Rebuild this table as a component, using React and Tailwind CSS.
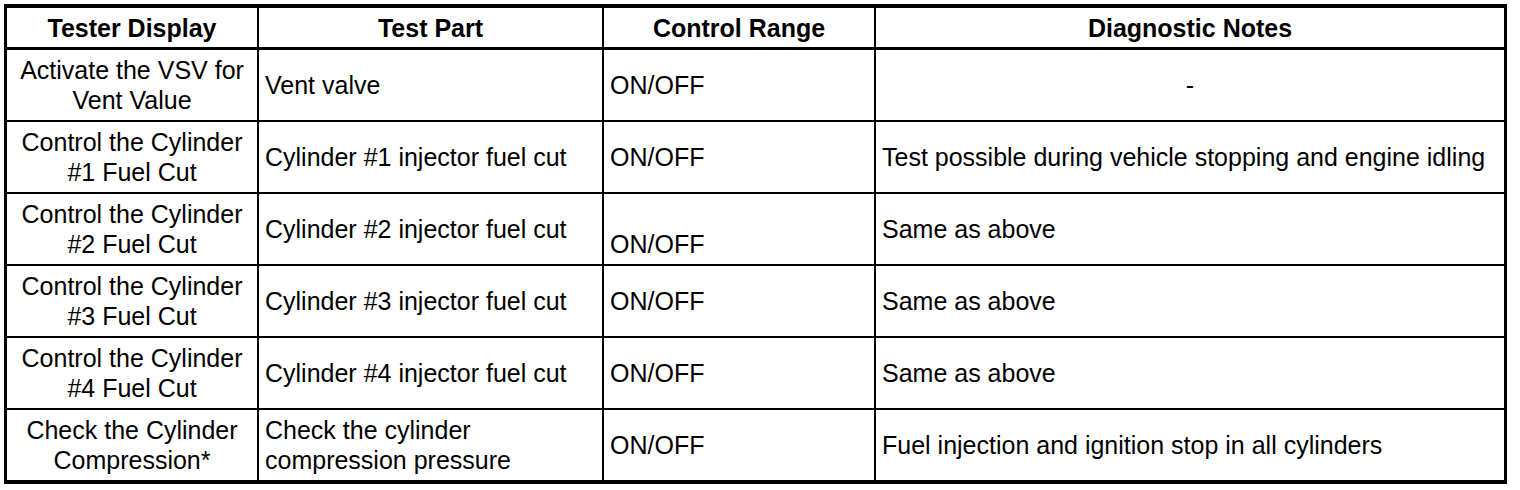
import React from "react";

const rows = [
  {
    display: ["Activate the VSV for", "Vent Value"],
    part: ["Vent valve"],
    range: ["ON/OFF"],
    notes: "-",
    notesCenter: true,
  },
  {
    display: ["Control the Cylinder", "#1 Fuel Cut"],
    part: ["Cylinder #1 injector fuel cut"],
    range: ["ON/OFF"],
    notes: "Test possible during vehicle stopping and engine idling",
  },
  {
    display: ["Control the Cylinder", "#2 Fuel Cut"],
    part: ["Cylinder #2 injector fuel cut"],
    range: ["\u00a0", "ON/OFF"],
    notes: "Same as above",
  },
  {
    display: ["Control the Cylinder", "#3 Fuel Cut"],
    part: ["Cylinder #3 injector fuel cut"],
    range: ["ON/OFF"],
    notes: "Same as above",
  },
  {
    display: ["Control the Cylinder", "#4 Fuel Cut"],
    part: ["Cylinder #4 injector fuel cut"],
    range: ["ON/OFF"],
    notes: "Same as above",
  },
  {
    display: ["Check the Cylinder", "Compression*"],
    part: ["Check the cylinder", "compression pressure"],
    range: ["ON/OFF"],
    notes: "Fuel injection and ignition stop in all cylinders",
  },
];

function Lines({ lines }) {
  return (
    <div>
      {lines.map((l, i) => (
        <div key={i} className="whitespace-nowrap">
          {l}
        </div>
      ))}
    </div>
  );
}

export default function App() {
  return (
    <div className="bg-white w-[1520px] h-[490px] pt-[4px] pl-[4px] font-['Liberation_Sans',Arial,sans-serif] text-[25px] leading-[30px] text-black">
      <div className="w-[1503px] border-x-[3px] border-y-4 border-black">
        <div className="grid grid-cols-[250px_343px_270px_628px] gap-x-[2px] gap-y-[2px] bg-black">
          {/* header */}
          {["Tester Display", "Test Part", "Control Range", "Diagnostic Notes"].map((h) => (
            <div
              key={h}
              className="bg-white h-[40px] border-b border-black flex items-center justify-center font-bold"
            >
              {h}
            </div>
          ))}

          {rows.map((r, i) => (
            <React.Fragment key={i}>
              <div className="bg-white h-[70px] flex items-center justify-center text-center">
                <Lines lines={r.display} />
              </div>
              <div className="bg-white h-[70px] flex items-center px-[6px]">
                <Lines lines={r.part} />
              </div>
              <div className="bg-white h-[70px] flex items-center px-[6px]">
                <Lines lines={r.range} />
              </div>
              <div
                className={`bg-white h-[70px] flex items-center px-[6px] ${
                  r.notesCenter ? "justify-center" : ""
                }`}
              >
                <span className="whitespace-nowrap">{r.notes}</span>
              </div>
            </React.Fragment>
          ))}
        </div>
      </div>
    </div>
  );
}
